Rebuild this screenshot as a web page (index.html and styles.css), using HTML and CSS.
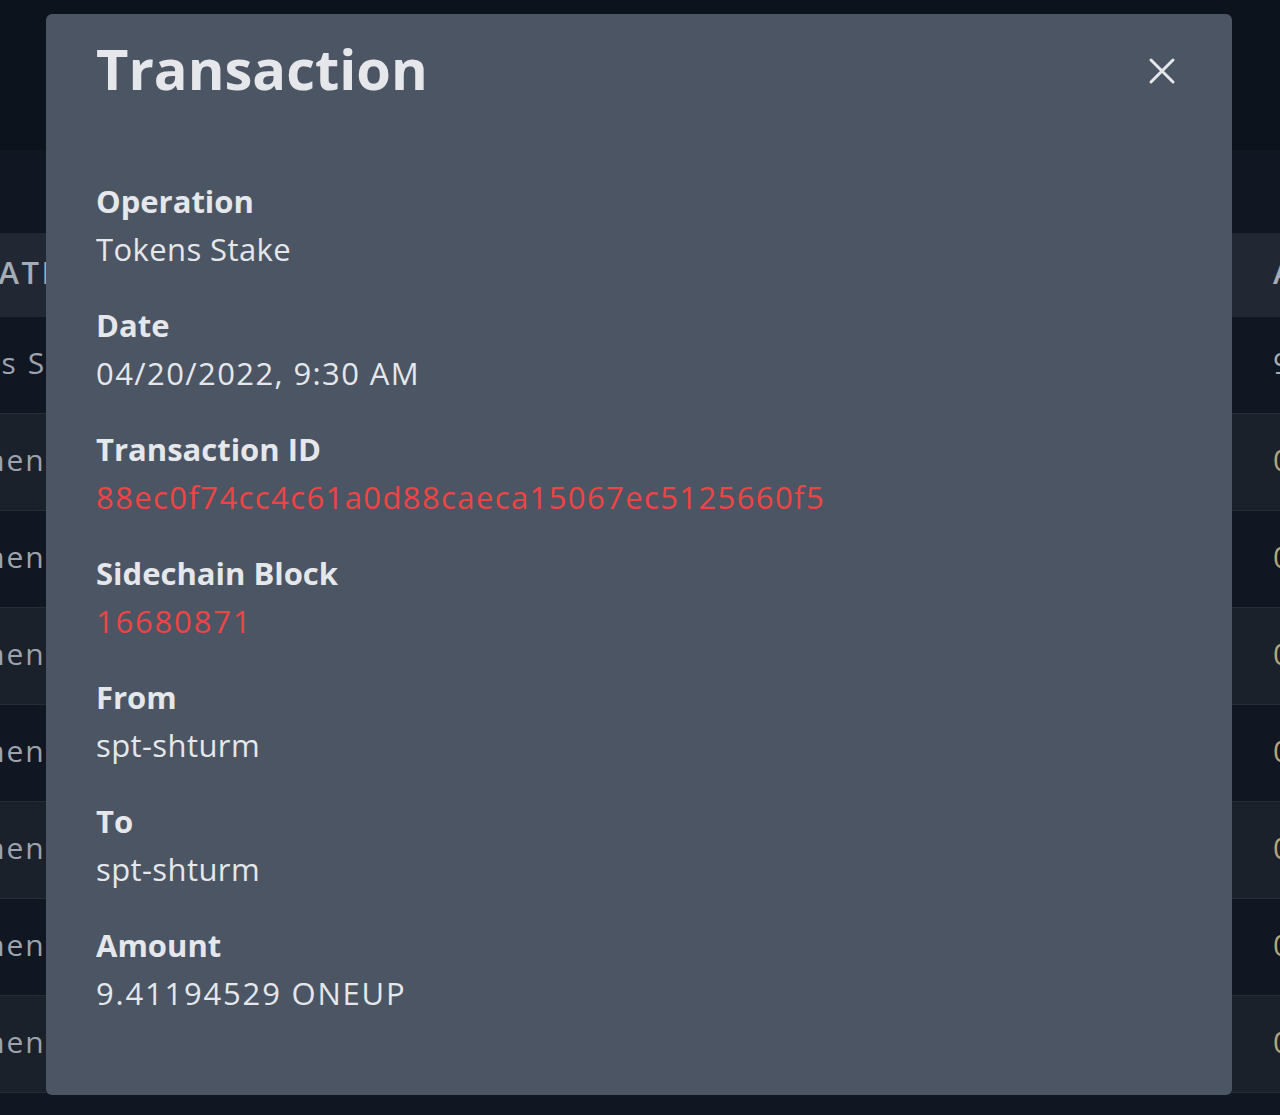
FILE: index.html
```html
<!DOCTYPE html>
<html lang="en">
<head>
<meta charset="utf-8">
<title>Transaction</title>
<link rel="stylesheet" href="styles.css">
</head>
<body>
<div class="page">
  <div class="topbar"></div>
  <div class="toolbar"></div>
  <div class="table">
    <div class="row head"><div class="c1">OPERATION</div><div class="c3">AMOUNT</div></div>
    <div class="row dark"><div class="c1">Tokens Stake</div><div class="c3 plain">9.41194529 ONEUP</div></div>
    <div class="row light"><div class="c1">Comments Curation Reward</div><div class="c3">0.00212 ONEUP</div></div>
    <div class="row dark"><div class="c1">Comments Curation Reward</div><div class="c3">0.00431 ONEUP</div></div>
    <div class="row light"><div class="c1">Comments Curation Reward</div><div class="c3">0.01022 ONEUP</div></div>
    <div class="row dark"><div class="c1">Comments Curation Reward</div><div class="c3">0.00118 ONEUP</div></div>
    <div class="row light"><div class="c1">Comments Curation Reward</div><div class="c3">0.00762 ONEUP</div></div>
    <div class="row dark"><div class="c1">Comments Curation Reward</div><div class="c3">0.00305 ONEUP</div></div>
    <div class="row light"><div class="c1">Comments Curation Reward</div><div class="c3">0.00987 ONEUP</div></div>
  </div>
</div>

<div class="modal">
  <h1 class="title">Transaction</h1>
  <button class="close" aria-label="Close">
    <svg width="28" height="28" viewBox="0 0 28 28"><path d="M3 3 L25 25 M25 3 L3 25" stroke="#e5e7eb" stroke-width="3" stroke-linecap="round" fill="none"/></svg>
  </button>
  <dl class="fields">
    <div class="field"><dt>Operation</dt><dd>Tokens Stake</dd></div>
    <div class="field"><dt>Date</dt><dd class="num">04/20/2022, 9:30 AM</dd></div>
    <div class="field"><dt>Transaction ID</dt><dd class="num link">88ec0f74cc4c61a0d88caeca15067ec5125660f5</dd></div>
    <div class="field"><dt>Sidechain Block</dt><dd class="num link wide">16680871</dd></div>
    <div class="field"><dt>From</dt><dd>spt-shturm</dd></div>
    <div class="field"><dt>To</dt><dd>spt-shturm</dd></div>
    <div class="field"><dt>Amount</dt><dd class="num wide">9.41194529 ONEUP</dd></div>
  </dl>
</div>
</body>
</html>
```
FILE: styles.css
```css
html, body {
  margin: 0;
  padding: 0;
}
body {
  width: 1280px;
  height: 1115px;
  overflow: hidden;
  background: #111722;
  font-family: "Open Sans", "Noto Sans", sans-serif;
}
.page {
  display: flex;
  flex-direction: column;
}
.topbar {
  height: 150px;
  background: #0d131c;
}
.toolbar {
  height: 83px;
  background: #111722;
}
.table {
  margin-left: -92px;
  width: 1500px;
  display: flex;
  flex-direction: column;
}
.row {
  display: grid;
  grid-template-columns: 1365px 1fr;
  align-items: center;
  height: 97px;
  box-sizing: border-box;
  padding-bottom: 5px;
  border-bottom: 1px solid #262c36;
  font-size: 30px;
  letter-spacing: 2px;
  color: #9ca3af;
  white-space: nowrap;
}
.row.head {
  height: 84px;
  padding-bottom: 6px;
  background: #222833;
  color: #a6acb6;
  font-weight: 600;
  font-size: 31px;
  letter-spacing: 2.5px;
  border-bottom: none;
}
.row .c1 {
  margin-left: -2px;
}
.row.head .c1 {
  margin-left: 0;
}
.row.dark { background: #111722; }
.row.light { background: #1b212b; }
.c3 { color: #b3a57c; }
.head .c3, .c3.plain { color: #a6acb6; }

.modal {
  position: absolute;
  left: 46px;
  top: 14px;
  width: 1186px;
  height: 1081px;
  box-sizing: border-box;
  padding: 21px 50px 0 50px;
  background: #4b5563;
  border-radius: 6px;
  color: #e5e7eb;
}
.title {
  margin: 0;
  font-size: 56px;
  line-height: 67px;
  font-weight: 700;
  color: #e5e7eb;
}
.close {
  position: absolute;
  right: 56px;
  top: 43px;
  width: 28px;
  height: 28px;
  padding: 0;
  border: none;
  background: none;
  display: flex;
}
.fields {
  margin: 75px 0 0 0;
  display: flex;
  flex-direction: column;
  gap: 28px;
}
.field {
  display: flex;
  flex-direction: column;
}
.field dt {
  font-size: 31px;
  line-height: 48px;
  font-weight: 700;
}
.field dd {
  margin: 0;
  font-size: 31px;
  line-height: 48px;
  font-weight: 400;
  letter-spacing: 0.4px;
}
.field dd.num {
  letter-spacing: 1.4px;
}
.field dd.num.wide {
  letter-spacing: 1.8px;
}
.field dd.link {
  color: #ef4444;
}
```
